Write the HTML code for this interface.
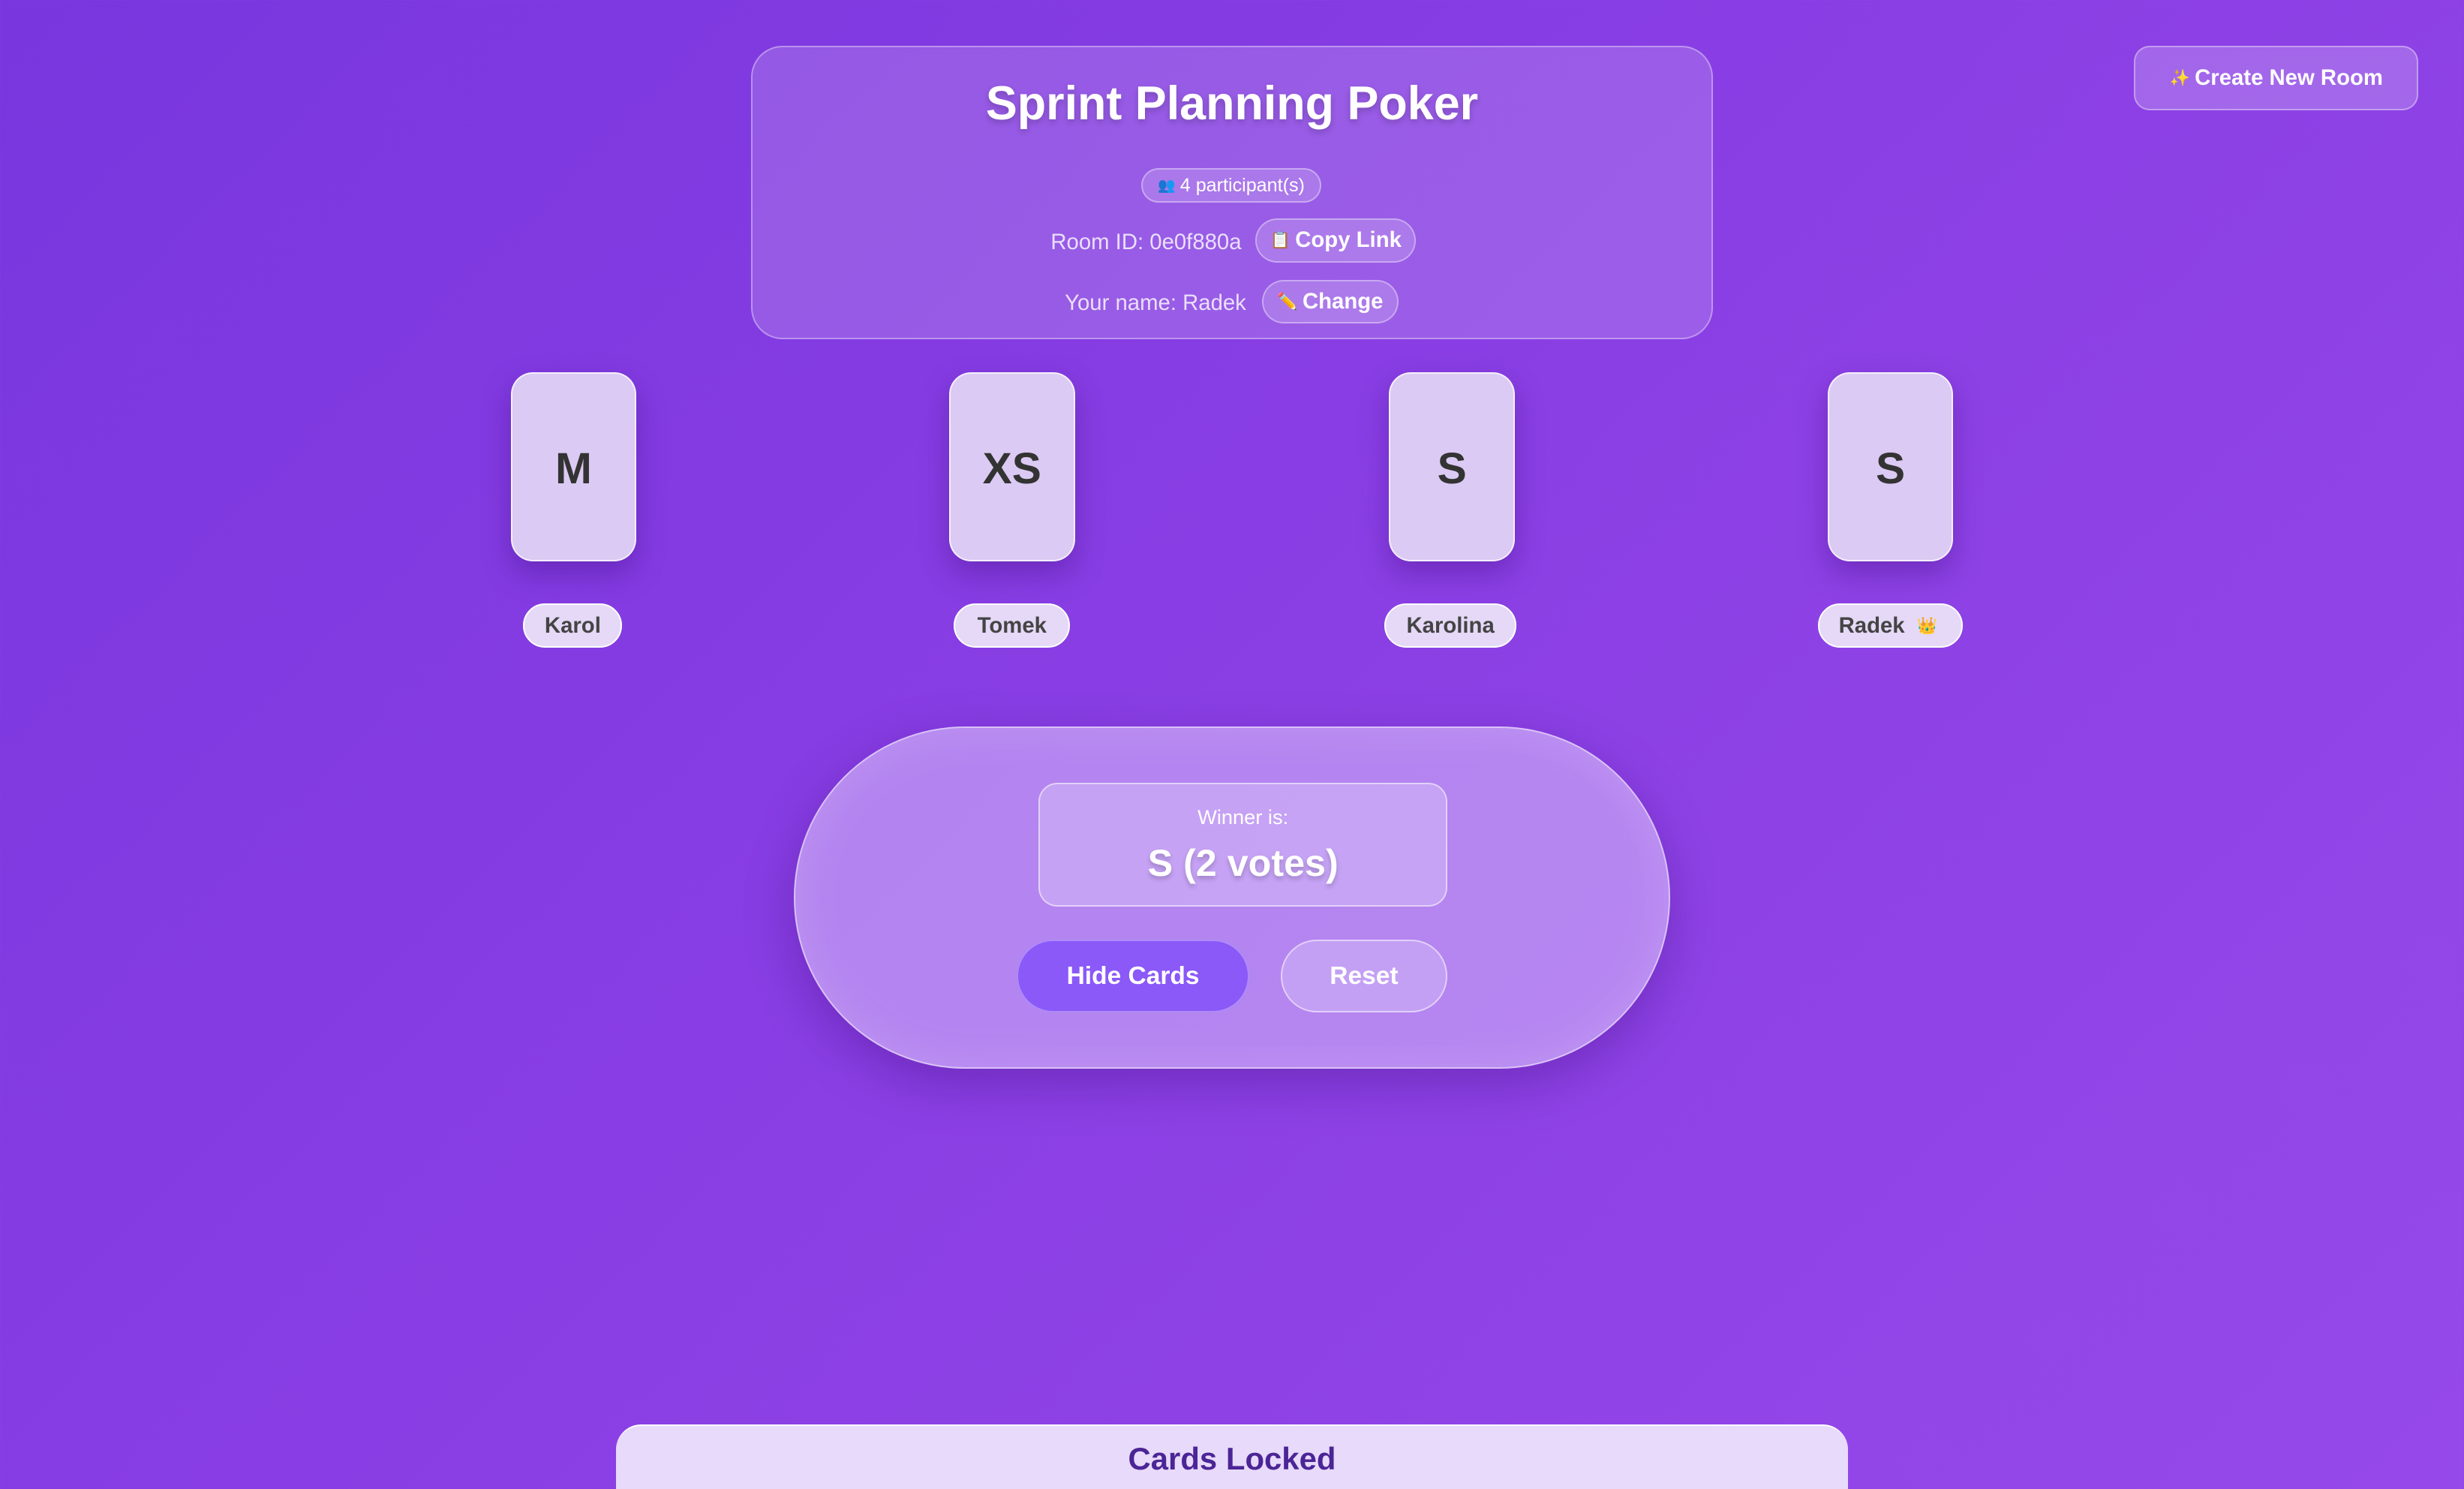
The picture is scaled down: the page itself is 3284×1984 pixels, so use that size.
<!DOCTYPE html>
<html><head><meta charset="utf-8"><style>
html,body{margin:0;padding:0;width:3284px;height:1984px;overflow:hidden}
body{background:linear-gradient(135deg,#7936de 0%,#8a3fe4 50%,#9649ea 100%);font-family:"Liberation Sans","Noto Sans CJK JP",sans-serif}
#w{zoom:2.0944;position:relative;width:1568px;height:948px}
.a{position:absolute;box-sizing:border-box}
.c{display:flex;align-items:center;justify-content:center}
.hdr{left:478px;top:29px;width:612px;height:187px;border-radius:20px;background:rgba(255,255,255,0.16);border:1px solid rgba(255,255,255,0.35)}
.t{color:#fff;font-weight:bold}
.pill{border-radius:14px;background:rgba(255,255,255,0.18);border:1px solid rgba(255,255,255,0.35);color:#fff;font-weight:bold}
.e{font-size:0.75em;margin-right:3px}
.card{top:237px;width:80px;height:120px;border-radius:14px;background:#dbcaf3;border:1px solid rgba(255,255,255,0.7);box-shadow:0 8px 18px rgba(60,10,120,0.35);font-size:28px;font-weight:bold;color:#333;padding-top:2px}
.name{top:384px;height:28px;border-radius:14px;background:#e5d9f7;border:1px solid #fff;font-size:14px;font-weight:bold;color:#444;padding:0 14px}
</style></head><body><div id="w">
<div class="a hdr"></div>
<div class="a t c" style="left:478px;top:46px;width:612px;height:40px;font-size:30px;text-shadow:0 2px 4px rgba(0,0,0,0.2)">Sprint Planning Poker</div>
<div class="a pill c" style="left:726px;top:107px;width:115px;height:22px;font-size:12px;font-weight:normal"><span class="e">👥</span>4 participant(s)</div>
<div class="a c" style="left:600px;top:144px;width:190px;height:20px;justify-content:flex-end;font-size:14px;color:#eadffb">Room ID: 0e0f880a</div>
<div class="a pill c" style="left:799px;top:139px;width:102px;height:28px;font-size:14px"><span class="e">📋</span>Copy Link</div>
<div class="a c" style="left:600px;top:183px;width:193px;height:20px;justify-content:flex-end;font-size:14px;color:#eadffb">Your name: Radek</div>
<div class="a pill c" style="left:803px;top:178px;width:87px;height:28px;font-size:14px"><span class="e">✏️</span>Change</div>
<div class="a pill c" style="left:1358px;top:29px;width:181px;height:41px;border-radius:10px;font-size:14px;background:rgba(255,255,255,0.2)"><span class="e">✨</span>Create New Room</div>

<div class="a card c" style="left:325px">M</div>
<div class="a card c" style="left:604px">XS</div>
<div class="a card c" style="left:884px">S</div>
<div class="a card c" style="left:1163px">S</div>
<div class="a name c" style="left:333px;width:63px">Karol</div>
<div class="a name c" style="left:607px;width:74px">Tomek</div>
<div class="a name c" style="left:881px;width:84px">Karolina</div>
<div class="a name c" style="left:1157px;width:92px">Radek&nbsp;&nbsp;<span class="e">👑</span></div>

<div class="a" style="left:505px;top:462px;width:558px;height:218px;border-radius:109px;background:rgba(215,190,250,0.55);border:1px solid rgba(255,255,255,0.5);box-shadow:0 10px 30px rgba(60,10,120,0.35),inset 0 0 30px rgba(255,255,255,0.15)"></div>
<div class="a" style="left:661px;top:498px;width:260px;height:79px;border-radius:12px;background:rgba(220,200,250,0.45);border:1px solid rgba(255,255,255,0.5)"></div>
<div class="a c" style="left:661px;top:511px;width:260px;height:18px;font-size:13px;color:#fff">Winner is:</div>
<div class="a t c" style="left:661px;top:534px;width:260px;height:30px;font-size:24px;text-shadow:0 2px 3px rgba(0,0,0,0.2)">S (2 votes)</div>
<div class="a t c" style="left:647px;top:598px;width:148px;height:46px;border-radius:23px;background:#8b59f8;font-size:16px;border:1px solid rgba(255,255,255,0.3)">Hide Cards</div>
<div class="a t c" style="left:815px;top:598px;width:106px;height:46px;border-radius:23px;background:rgba(220,200,250,0.4);border:1px solid rgba(255,255,255,0.5);font-size:16px">Reset</div>

<div class="a" style="left:392px;top:906px;width:784px;height:60px;border-radius:16px;background:#e8dafa;border-top:1px solid #fff"></div>
<div class="a c" style="left:392px;top:915px;width:784px;height:26px;font-size:20px;font-weight:bold;color:#4b2596">Cards Locked</div>
</div></body></html>
